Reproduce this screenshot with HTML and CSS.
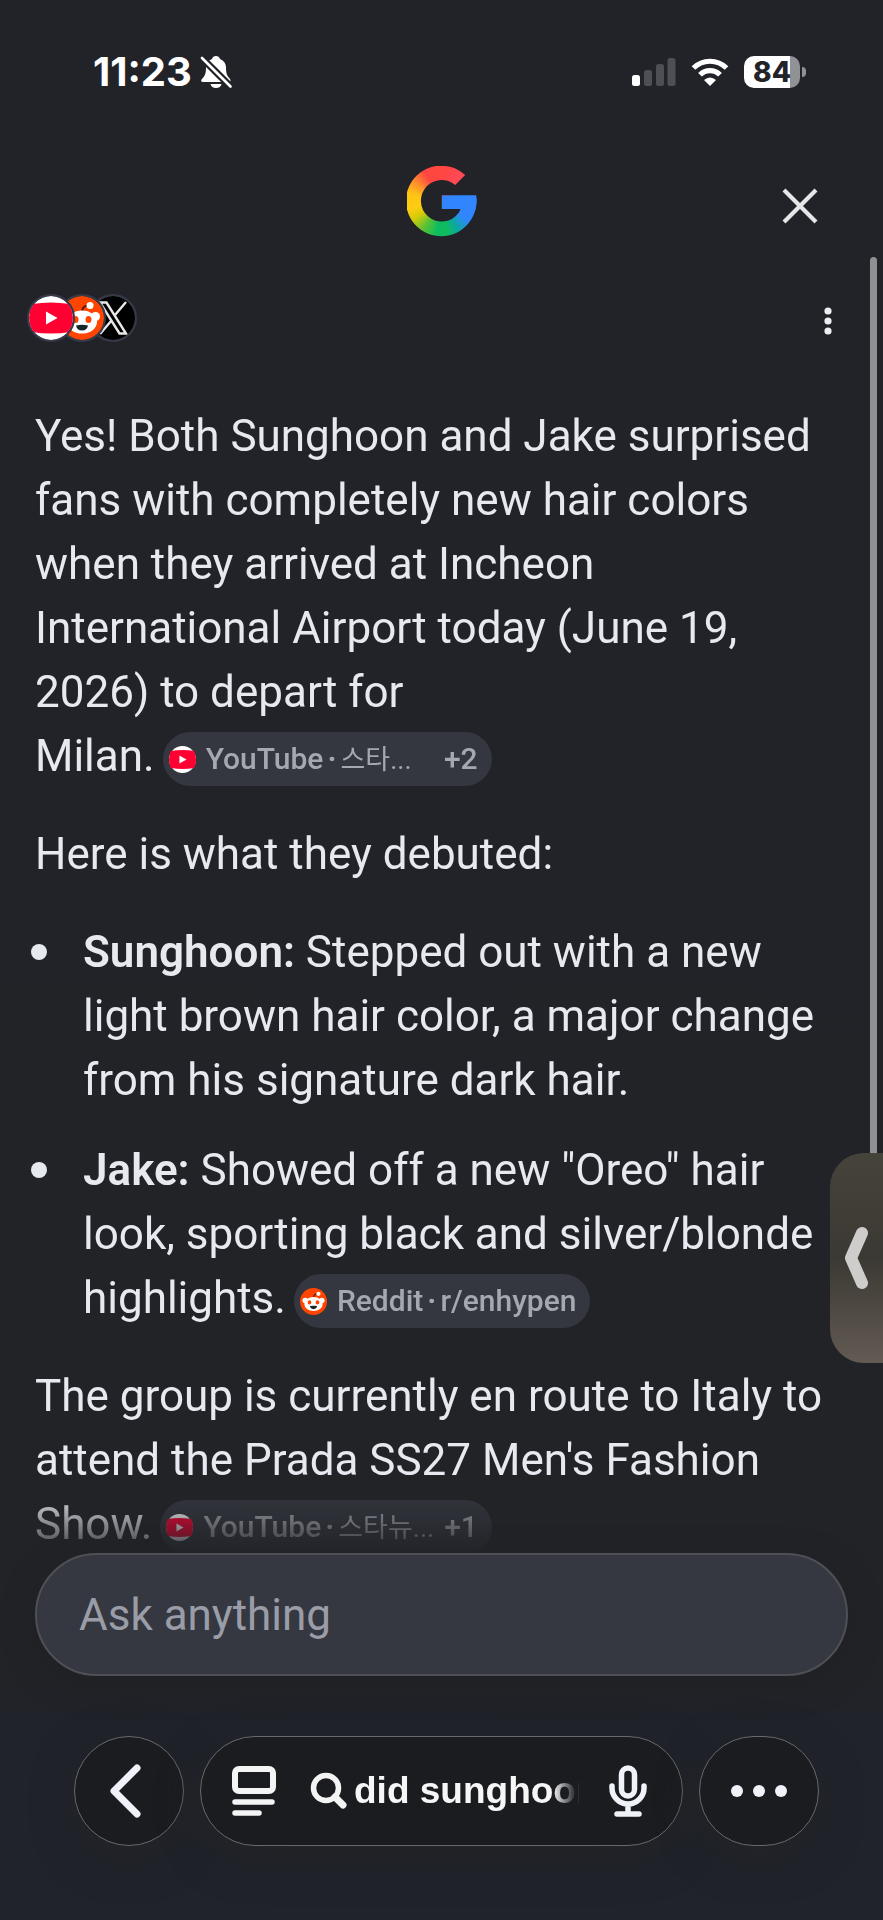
FILE: index.html
```
<!DOCTYPE html>
<html lang="en">
<head>
<meta charset="utf-8">
<meta name="viewport" content="width=device-width, initial-scale=1">
<title>Search answer</title>
<link rel="stylesheet" href="styles.css">
</head>
<body>
<svg class="defs" aria-hidden="true">
  <symbol id="youtube" viewBox="0 0 44 44">
    <circle cx="22" cy="22" r="22" fill="#fff"/>
    <path d="M3 8Q22 5 41 8Q44 15 44 22Q44 29 41 36Q22 39 3 36Q0 29 0 22Q0 15 3 8Z" fill="#ff0033"/>
    <path d="M17 15.500L28.500 22L17 28.500Z" fill="#fff"/>
  </symbol>
  <symbol id="reddit" viewBox="0 0 44 44">
    <circle cx="22" cy="22" r="22" fill="#ff4500"/>
    <path d="M22 17Q22 9 29 9.500" fill="none" stroke="#5d1a0a" stroke-width="2"/>
    <circle cx="30" cy="9.500" r="3.500" fill="#fff"/>
    <circle cx="8.500" cy="20.500" r="4.500" fill="#fff"/>
    <circle cx="35.500" cy="20.500" r="4.500" fill="#fff"/>
    <ellipse cx="22" cy="26" rx="15" ry="11.500" fill="#fff"/>
    <ellipse cx="15.500" cy="23.500" rx="3" ry="3.500" fill="#ff4500"/>
    <ellipse cx="28.500" cy="23.500" rx="3" ry="3.500" fill="#ff4500"/>
    <path d="M16 29.500Q22 28 28 29.500Q27 34.500 22 34.500Q17 34.500 16 29.500Z" fill="#16262b"/>
  </symbol>
  <symbol id="xlogo" viewBox="0 0 44 44">
    <circle cx="22" cy="22" r="22" fill="#000"/>
    <path d="M9 6.500H15.500L35 37.500H28.500ZM35 6L24 19M20.500 24.500L9 38" fill="none" stroke="#e8e8e8" stroke-width="2.400"/>
  </symbol>
</svg>

<div class="status">
  <div class="status-left">
    <span class="time">11:23</span>
    <svg width="32" height="34" viewBox="0 0 32 34" aria-label="Silent">
      <path d="M16 1C18 1 19.500 2 20 4C24 5.500 26 9 26 13C26 20 28 21.500 30 24C31 26 30.500 27 29 27H3C1 27 0.500 25.500 2 24C4.500 21.500 6 19 6 13C6 9 8 5.500 12 4C12.500 2 14 1 16 1Z" fill="#fff"/>
      <path d="M10.500 29H21.500C21 31.500 19 33 16 33C13 33 11 31.500 10.500 29Z" fill="#fff"/>
      <path d="M0 1L32 33" stroke="#222329" stroke-width="7"/>
      <path d="M2 3L30.500 31.500" stroke="#fff" stroke-width="2.600" stroke-linecap="round"/>
    </svg>
  </div>
  <div class="status-right">
    <svg width="44" height="28" viewBox="0 0 44 28" aria-label="Signal">
      <rect x="0" y="17" width="8" height="11" rx="2.500" fill="#fff"/>
      <rect x="12" y="12" width="8" height="16" rx="2.500" fill="#4e4f54"/>
      <rect x="24" y="6" width="8" height="22" rx="2.500" fill="#4e4f54"/>
      <rect x="35.500" y="0" width="8" height="28" rx="2.500" fill="#4e4f54"/>
    </svg>
    <svg width="38" height="28" viewBox="0 0 38 28" aria-label="Wi-Fi">
      <path d="M2.500 10A23.500 23.500 0 0 1 35.500 10M9 16.800A14 14 0 0 1 29 16.800" fill="none" stroke="#fff" stroke-width="5.200"/>
      <path d="M19 28L13 22Q19 17 25 22Z" fill="#fff"/>
    </svg>
    <div class="battery"><span class="level">84</span><i class="cap"></i></div>
  </div>
</div>

<header class="header">
  <span class="g-logo" role="img" aria-label="Google"></span>
  <button class="close" type="button" aria-label="Close">
    <svg width="36" height="36" viewBox="0 0 36 36"><path d="M2 2L34 34M34 2L2 34" stroke="#e6e6e8" stroke-width="4.200"/></svg>
  </button>
</header>

<div class="sources">
  <button class="stack" type="button" aria-label="Sources">
    <svg class="src"><use href="#youtube"/></svg>
    <svg class="src"><use href="#reddit"/></svg>
    <svg class="src"><use href="#xlogo"/></svg>
  </button>
  <button class="kebab" type="button" aria-label="More">
    <svg width="8" height="28" viewBox="0 0 8 28" fill="#eceef2"><circle cx="4" cy="4" r="3.600"/><circle cx="4" cy="14" r="3.600"/><circle cx="4" cy="24" r="3.600"/></svg>
  </button>
</div>

<main class="answer">
  <p>Yes! Both Sunghoon and Jake surprised fans with completely new hair colors when they arrived at Incheon International Airport today (June 19, 2026) to depart for <span class="keep">Milan.<a class="chip chip-wide" href="#"><svg class="chip-icon"><use href="#youtube"/></svg><span class="label">YouTube<b class="dot">·</b><span class="ko" lang="ko">스타...</span></span><span>+2</span></a></span></p>
  <p>Here is what they debuted:</p>
  <ul>
    <li><strong>Sunghoon:</strong> Stepped out with a new light brown hair color, a major change from his signature dark hair.</li>
    <li><strong>Jake:</strong> Showed off a new "Oreo" hair look, sporting black and silver/blonde <span class="keep">highlights.<a class="chip" href="#"><svg class="chip-icon"><use href="#reddit"/></svg><span class="label">Reddit<b class="dot">·</b>r/enhypen</span></a></span></li>
  </ul>
  <p>The group is currently en route to Italy to attend the Prada SS27 Men's Fashion <span class="keep">Show.<a class="chip chip-wide" href="#"><svg class="chip-icon"><use href="#youtube"/></svg><span class="label">YouTube<b class="dot">·</b><span class="ko" lang="ko">스타뉴...</span></span><span>+1</span></a></span></p>
</main>

<form class="composer">
  <input class="ask" type="text" placeholder="Ask anything" aria-label="Ask anything">
</form>

<nav class="toolbar">
  <button class="round" type="button" aria-label="Back">
    <svg width="32" height="54" viewBox="0 0 32 54"><path d="M28 4L5 27L28 50" fill="none" stroke="#eff2f9" stroke-width="7" stroke-linecap="round" stroke-linejoin="round"/></svg>
  </button>
  <div class="address">
    <button class="plain" type="button" aria-label="Page menu">
      <svg width="44" height="50" viewBox="0 0 44 50"><rect x="3" y="3" width="38" height="22" rx="4" fill="none" stroke="#f4f4f5" stroke-width="6"/><path d="M3 36H40M3 47H27" stroke="#f4f4f5" stroke-width="5.500" stroke-linecap="round"/></svg>
    </button>
    <button class="query" type="button">
      <svg width="38" height="38" viewBox="0 0 38 38"><circle cx="16" cy="16" r="12.500" fill="none" stroke="#f4f4f5" stroke-width="5.500"/><path d="M25 25L33 33" stroke="#f4f4f5" stroke-width="7" stroke-linecap="round"/></svg>
      <span class="query-text">did sunghoon</span>
    </button>
    <button class="plain" type="button" aria-label="Voice search">
      <svg width="38" height="52" viewBox="0 0 38 52" fill="none" stroke="#eff2f9" stroke-linecap="round"><rect x="12.500" y="3" width="13" height="28" rx="6.500" stroke-width="5.500"/><path d="M3 21V23A16 16 0 0 0 35 23V21M19 40V48M8 49H30" stroke-width="5.500"/></svg>
    </button>
  </div>
  <button class="round more" type="button" aria-label="More options">
    <svg width="56" height="12" viewBox="0 0 56 12" fill="#eff2f9"><circle cx="6" cy="6" r="6"/><circle cx="28" cy="6" r="6"/><circle cx="50" cy="6" r="6"/></svg>
  </button>
</nav>

<div class="scrollbar"></div>
<button class="side-tab" type="button" aria-label="Open panel">
  <svg width="24" height="62" viewBox="0 0 24 62"><path d="M17 6L6 31L17 56" fill="none" stroke="#cfcccc" stroke-width="12" stroke-linecap="round" stroke-linejoin="round"/></svg>
</button>
</body>
</html>
```
FILE: styles.css
```
* { box-sizing: border-box; }

body {
  margin: 0;
  min-height: 100vh;
  display: flex;
  flex-direction: column;
  background: linear-gradient(#222329 0, #222327 1680px, #20232b 1730px);
  color: #e7e9f1;
  font-family: Roboto, "Noto Sans CJK KR", sans-serif;
  font-size: 44px;
  line-height: 64px;
  overflow-x: hidden;
}

button {
  margin: 0;
  padding: 0;
  border: 0;
  background: none;
  color: inherit;
  font: inherit;
}

svg { display: block; flex: none; }
.defs { position: absolute; width: 0; height: 0; }

.status {
  display: flex;
  justify-content: space-between;
  align-items: center;
  height: 40px;
  margin: 52px 77px 0 93px;
}
.status-left, .status-right { display: flex; align-items: center; }
.status-left { gap: 8px; }
.status-right { gap: 15px; }
.time { font: 700 40px/40px Inter, sans-serif; color: #fff; }

.battery { display: flex; align-items: center; gap: 2px; }
.level {
  width: 56px;
  height: 32px;
  border-radius: 10px;
  background: linear-gradient(90deg, #fff 46px, #919296 46px);
  color: #222329;
  font: 800 28px/32px Inter, sans-serif;
  text-align: center;
}
.cap { width: 4px; height: 10px; border-radius: 0 4px 4px 0; background: #919296; }

.header {
  display: grid;
  grid-template-columns: 1fr auto 1fr;
  align-items: center;
  height: 72px;
  margin: 74px 65px 0;
}
.g-logo {
  grid-column: 2;
  width: 70px;
  height: 72px;
  background:
    linear-gradient(#3186ff, #3186ff) 35px 29px / 35px 15px no-repeat,
    conic-gradient(#ff4641 0deg, #ff4a5c 45deg, #3186ff 60deg, #3186ff 125deg, #0ca8a0 150deg, #0ebc5f 170deg, #0ebc5f 190deg, #5cc234 215deg, #d8cb08 240deg, #ffcd12 260deg, #ffc413 285deg, #ff8a2e 308deg, #ff4641 330deg);
  clip-path: path("M58.700 9A35.300 35.300 0 1 0 69.600 29.500H35.300V43H54.300A20.800 20.800 0 1 1 48.700 19Z");
}
.close { justify-self: end; padding-top: 8px; }

.sources {
  display: flex;
  align-items: center;
  justify-content: space-between;
  height: 48px;
  margin: 56px 51px 0 27px;
}
.stack { display: flex; }
.src {
  width: 48px;
  height: 48px;
  border: 2px solid #363a48;
  border-radius: 50%;
  background: #363a48;
  position: relative;
}
.src:nth-child(1) { z-index: 3; }
.src:nth-child(2) { z-index: 2; }
.src + .src { margin-left: -17px; }
.kebab { padding-top: 6px; }

.answer {
  display: flex;
  flex-direction: column;
  gap: 34px;
  padding: 62px 48px 0 35px;
  -webkit-mask-image: linear-gradient(to top, rgba(0,0,0,.1), #000 68px);
  mask-image: linear-gradient(to top, rgba(0,0,0,.1), #000 68px);
}
.answer p { margin: 0; }
.answer ul {
  display: flex;
  flex-direction: column;
  gap: 26px;
  margin: 0;
  padding: 0;
  list-style: none;
}
.answer li { position: relative; padding-left: 48px; }
.answer li::before {
  content: "";
  position: absolute;
  left: -4px;
  top: 24px;
  width: 16px;
  height: 16px;
  border-radius: 50%;
  background: #e7e9f1;
}
.answer strong { font-weight: 600; }
.keep { white-space: nowrap; }

.chip {
  display: inline-flex;
  align-items: center;
  gap: 10px;
  height: 54px;
  margin-left: 8px;
  padding: 0 14px 0 6px;
  border-radius: 27px;
  background: #34373f;
  color: #a5a8b0;
  font-size: 30px;
  font-weight: 500;
  line-height: 54px;
  text-decoration: none;
  vertical-align: middle;
}
.chip-wide { min-width: 329px; }
.chip-icon { width: 27px; height: 27px; }
.label { flex: 1; }
.dot { margin: 0 4px; }
.ko { font-size: 27px; font-weight: 400; }

.composer { margin: -3px 35px 0; }
.ask {
  display: block;
  width: 100%;
  height: 123px;
  padding: 0 42px;
  border: 2px solid #4e5056;
  border-radius: 62px;
  background: #353840;
  color: #e7e9f1;
  font: 400 44px/64px Roboto, sans-serif;
  box-shadow: 0 8px 30px rgba(32,33,36,.8);
  position: relative;
}
.ask::placeholder { color: #9a9da7; opacity: 1; }

.toolbar {
  display: flex;
  gap: 16px;
  margin: 60px 64px 0 74px;
  padding-bottom: 74px;
}
.round, .address {
  display: flex;
  align-items: center;
  height: 110px;
  border: 1px solid #68696d;
  border-radius: 60px;
  background: #1a1c20;
  box-shadow: 0 12px 40px rgba(34,35,38,.9);
}
.round { flex: none; justify-content: center; width: 110px; }
.round:first-child { padding-right: 8px; }
.more { width: 120px; }
.address { flex: 1; min-width: 0; padding: 0 35px 0 31px; }
.plain { flex: none; }
.query {
  flex: 1;
  min-width: 0;
  display: flex;
  align-items: center;
  gap: 6px;
  margin: 0 30px 0 34px;
  text-align: left;
}
.query-text {
  flex: 1;
  min-width: 0;
  overflow: hidden;
  white-space: nowrap;
  color: #f6f6f7;
  font: 700 37px/48px "Liberation Sans", sans-serif;
  -webkit-mask-image: linear-gradient(to left, rgba(0,0,0,.15) 6px, #000 26px);
  mask-image: linear-gradient(to left, rgba(0,0,0,.15) 6px, #000 26px);
}

.scrollbar {
  position: absolute;
  right: 6px;
  top: 257px;
  width: 7px;
  height: 897px;
  border-radius: 4px 4px 0 0;
  background: #8f9093;
}
.side-tab {
  position: absolute;
  right: 0;
  top: 1153px;
  display: flex;
  align-items: center;
  justify-content: center;
  width: 53px;
  height: 210px;
  border-radius: 34px 0 0 34px;
  background: linear-gradient(#46433b, #3b3933 50%, #635b53);
}
```
